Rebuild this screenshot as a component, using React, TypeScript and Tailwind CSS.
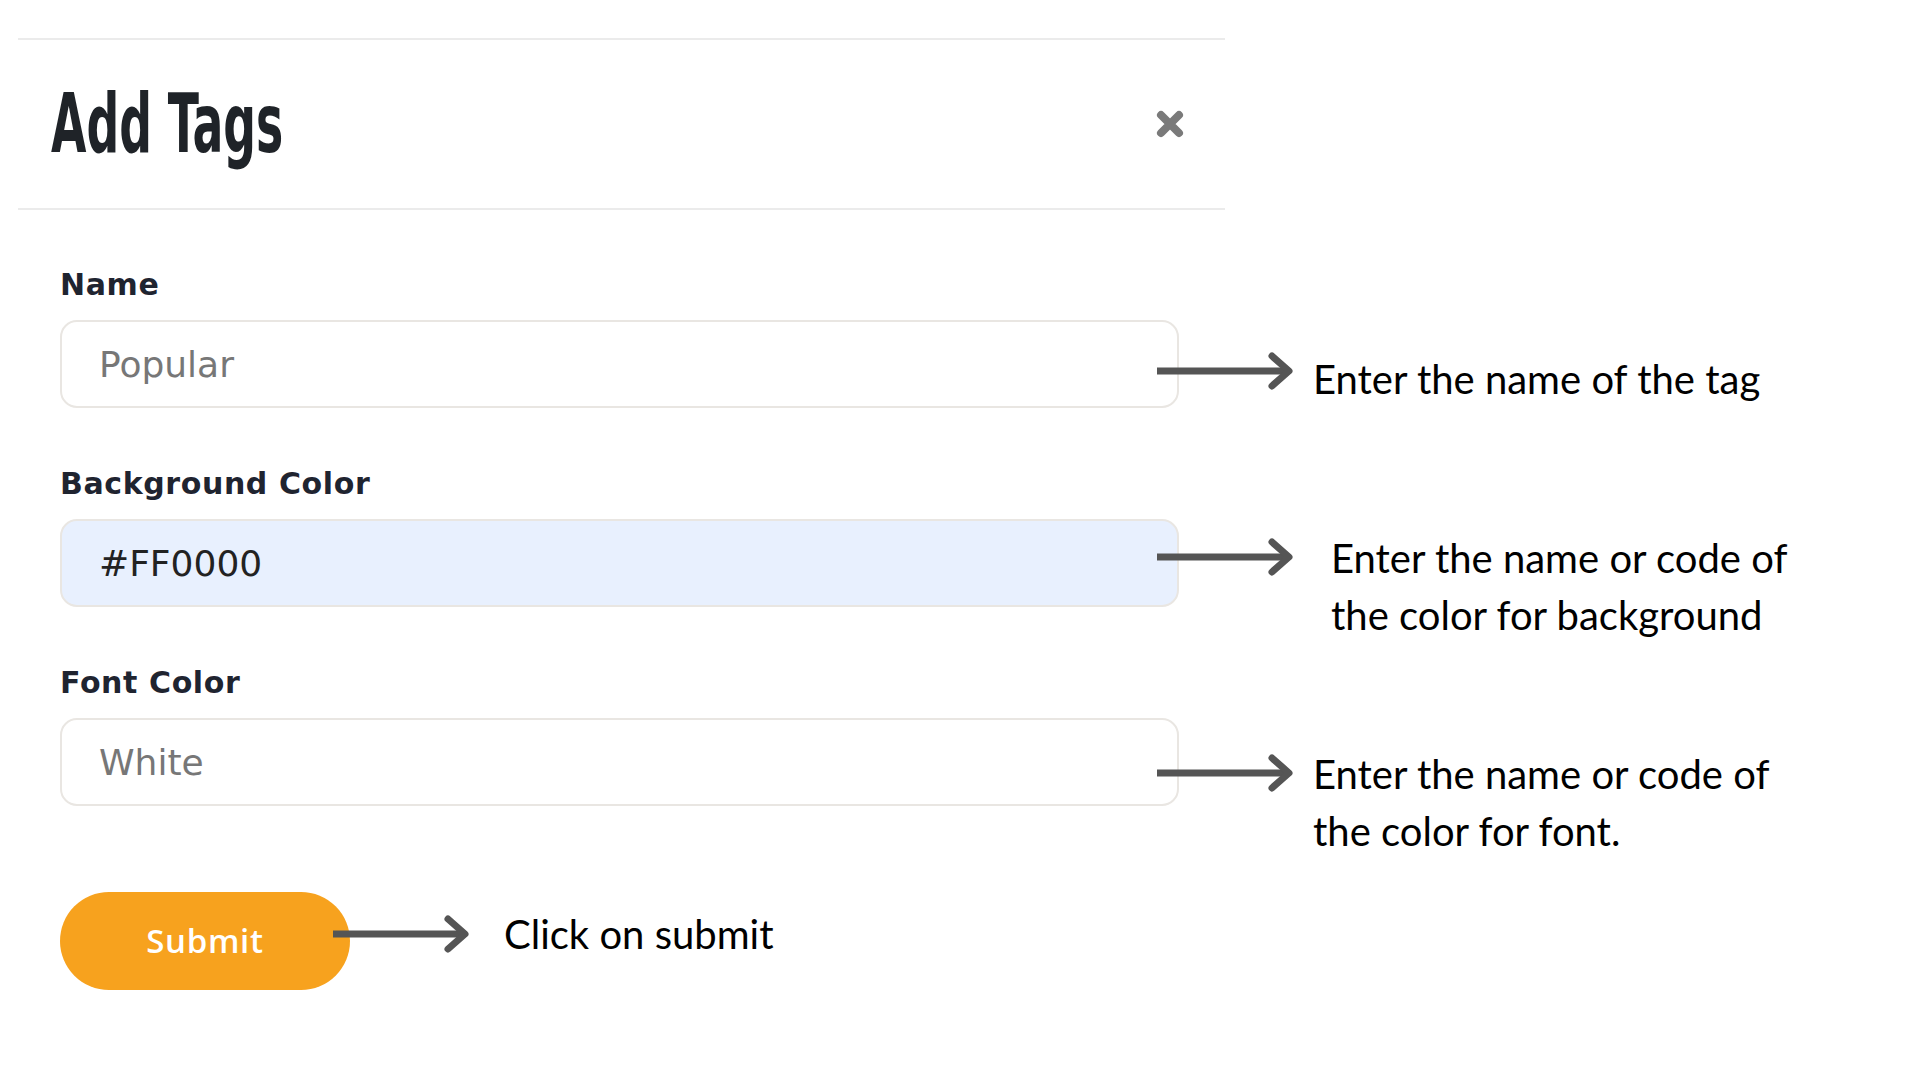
import React from 'react';

const Arrow = ({ className = '' }: { className?: string }) => (
  <svg width="137" height="40" viewBox="0 0 137 40" className={`shrink-0 ${className}`}>
    <line x1="0" y1="20" x2="132" y2="20" stroke="#555555" strokeWidth="7" />
    <polyline points="115,5 132,20 115,35" fill="none" stroke="#555555" strokeWidth="7" strokeLinecap="round" strokeLinejoin="round" />
  </svg>
);

const Field = ({
  label,
  value,
  placeholder,
  filled,
  arrowTop,
  noteTop,
  noteGap,
  note,
}: {
  label: string;
  value?: string;
  placeholder?: string;
  filled?: boolean;
  arrowTop: string;
  noteTop: string;
  noteGap: string;
  note: React.ReactNode;
}) => (
  <div className="flex flex-col">
    <div className="h-[40px] flex items-center text-[30px] font-semibold tracking-[0.02em] text-[#1f2430] font-['DejaVu_Sans',sans-serif]">
      {label}
    </div>
    {/* fixed height row: the note may run below the input without pushing the next field */}
    <div className="flex items-start h-[88px] mt-[16px]">
      <input
        readOnly
        value={value ?? ''}
        placeholder={placeholder}
        className={`w-[1119px] h-[88px] shrink-0 rounded-[17px] border-2 border-[#e9e6e2] px-[37px] text-[36px] font-['DejaVu_Sans',sans-serif] text-[#222] placeholder:text-[#777] outline-none ${
          filled ? 'bg-[#e8f0fe]' : 'bg-white'
        }`}
      />
      <Arrow className={`-ml-[22px] ${arrowTop}`} />
      <div className={`${noteGap} ${noteTop} shrink-0 text-[40px] leading-[57px] text-black font-['Lato',sans-serif]`}>{note}</div>
    </div>
  </div>
);

export default function App() {
  return (
    <div className="min-h-screen w-full bg-white pt-[38px] pl-[18px]">
      {/* header */}
      <div className="w-[1207px] h-[172px] border-t-2 border-b-2 border-[#ebebeb] flex items-center justify-between pl-[33px] pr-[41px]">
        <h1 className="origin-left scale-x-[0.62] text-[82px] leading-none font-bold text-[#1f2328] font-['Liberation_Sans_Narrow','DejaVu_Sans_Condensed',sans-serif]">
          Add Tags
        </h1>
        <svg width="28" height="28" viewBox="0 0 28 28">
          <path d="M5 5 L23 23 M23 5 L5 23" stroke="#7a7a7a" strokeWidth="8" strokeLinecap="round" />
        </svg>
      </div>

      {/* body */}
      <div className="flex flex-col pl-[42px] pt-[54px] gap-[55px]">
        <Field
          label="Name"
          placeholder="Popular"
          arrowTop="mt-[31px]"
          noteGap="ml-[19px]"
          noteTop="mt-[31px]"
          note={<p>Enter the name of the tag</p>}
        />
        <Field
          label="Background Color"
          value="#FF0000"
          filled
          arrowTop="mt-[18px]"
          noteGap="ml-[37px]"
          noteTop="mt-[11px]"
          note={
            <>
              <p>Enter the name or code of</p>
              <p>the color for background</p>
            </>
          }
        />
        <Field
          label="Font Color"
          placeholder="White"
          arrowTop="mt-[35px]"
          noteGap="ml-[19px]"
          noteTop="mt-[28px]"
          note={
            <>
              <p>Enter the name or code of</p>
              <p>the color for font.</p>
            </>
          }
        />
      </div>

      <div className="flex items-start pl-[42px] mt-[86px]">
        <button className="w-[290px] h-[98px] shrink-0 rounded-full bg-[#f7a21e] text-white text-[33px] font-semibold tracking-[0.02em] font-['Open_Sans',sans-serif]">
          Submit
        </button>
        <Arrow className="-ml-[17px] mt-[22px]" />
        <p className="ml-[34px] mt-[14px] text-[40px] leading-[57px] text-black font-['Lato',sans-serif]">Click on submit</p>
      </div>
    </div>
  );
}
